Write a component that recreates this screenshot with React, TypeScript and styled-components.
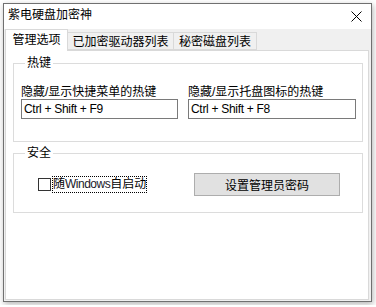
import React from 'react'
import styled, { createGlobalStyle } from 'styled-components'

const GlobalStyle = createGlobalStyle`
  html, body {
    margin: 0;
    padding: 0;
    background: #ffffff;
  }
  body {
    font-family: "Liberation Sans", "Noto Sans CJK SC", sans-serif;
    font-size: 12px;
    color: #000;
  }
`

const Window = styled.div`
  box-sizing: border-box;
  margin: 3px;
  width: 369px;
  height: 299px;
  border: 1px solid #707070;
  background: #f0f0f0;
  box-shadow: 1px 2px 6px rgba(0, 0, 0, 0.3);
  display: flex;
  flex-direction: column;
`

const TitleBar = styled.div`
  height: 25px;
  flex: none;
  background: #ffffff;
  display: flex;
  align-items: flex-start;
  padding: 4px 0 0 4px;
  box-sizing: border-box;
`

const Title = styled.span`
  font-family: "Noto Sans CJK SC", sans-serif;
  font-size: 12px;
  line-height: 12px;
`

const CloseIcon = styled.svg`
  margin: 3px 9px 0 auto;
  display: block;
`

const Client = styled.div`
  flex: 1;
  display: flex;
  flex-direction: column;
  padding: 0 2px 1px 1px;
  min-height: 0;
`

const TabStrip = styled.div`
  height: 21px;
  flex: none;
  display: flex;
  align-items: flex-end;
`

const Tab = styled.div<{ $active?: boolean; $w: number }>`
  box-sizing: border-box;
  width: ${p => p.$w}px;
  height: ${p => (p.$active ? 22 : 18)}px;
  margin-bottom: ${p => (p.$active ? -1 : 0)}px;
  margin-left: ${p => (p.$active ? 0 : -1)}px;
  padding-top: ${p => (p.$active ? 3 : 2)}px;
  border: 1px solid #d9d9d9;
  border-bottom: ${p => (p.$active ? 'none' : '1px solid #d9d9d9')};
  background: ${p => (p.$active ? '#ffffff' : '#f0f0f0')};
  position: relative;
  z-index: ${p => (p.$active ? 2 : 1)};
  display: flex;
  justify-content: center;
  font-family: "Noto Sans CJK SC", sans-serif;
  font-size: 12px;
  line-height: 12px;
  white-space: nowrap;
`

const Panel = styled.div`
  flex: 1;
  background: #ffffff;
  border: 1px solid #d9d9d9;
  padding: 5px 5px 0 7px;
  display: flex;
  flex-direction: column;
  gap: 4px;
`

const Group = styled.fieldset<{ $padTop: number; $padBottom: number }>`
  margin: 0;
  padding: ${p => p.$padTop}px 0 ${p => p.$padBottom}px 7px;
  border: 1px solid #dcdcdc;
  min-width: 0;
`

const Legend = styled.legend`
  margin-left: 4px;
  padding: 0 2px;
  font-size: 12px;
  line-height: 14px;
`

const HotkeyGrid = styled.div`
  display: grid;
  grid-template-columns: 157px 168px;
  column-gap: 10px;
`

const Field = styled.div`
  display: flex;
  flex-direction: column;
`

const FieldLabel = styled.div`
  font-size: 12px;
  line-height: 14px;
  white-space: nowrap;
`

const HotkeyInput = styled.div`
  box-sizing: border-box;
  height: 20px;
  border: 1px solid #7a7a7a;
  padding-left: 2px;
  font-family: "Liberation Sans", sans-serif;
  font-size: 12px;
  line-height: 18px;
  letter-spacing: -0.3px;
  white-space: nowrap;
`

const SecurityRow = styled.div`
  display: flex;
  align-items: center;
  padding-left: 17px;
`

const CheckBox = styled.span`
  box-sizing: border-box;
  width: 13px;
  height: 13px;
  border: 1px solid #333333;
  background: #ffffff;
  flex: none;
`

const CheckText = styled.span`
  margin-left: 1px;
  height: 17px;
  box-sizing: border-box;
  border: 1px dotted #000;
  line-height: 15px;
  font-size: 12px;
  white-space: nowrap;
`

const Win = styled.span`
  letter-spacing: -0.5px;
  color: #1a1a2a;
`

const Button = styled.div`
  box-sizing: border-box;
  margin: 0 22px 0 auto;
  width: 146px;
  height: 23px;
  border: 1px solid #adadad;
  background: #e1e1e1;
  display: flex;
  align-items: center;
  justify-content: center;
  font-family: "Noto Sans CJK SC", sans-serif;
  font-size: 12px;
  line-height: 12px;
`

export default function App() {
  return (
    <>
      <GlobalStyle />
      <Window>
        <TitleBar>
          <Title>紫电硬盘加密神</Title>
          <CloseIcon width="11" height="11" viewBox="0 0 11 11">
            <path d="M0.5 0.5 L10.5 10.5 M10.5 0.5 L0.5 10.5" stroke="#000" strokeWidth="1" fill="none" />
          </CloseIcon>
        </TitleBar>
        <Client>
          <TabStrip>
            <Tab $active $w={63}>管理选项</Tab>
            <Tab $w={107}>已加密驱动器列表</Tab>
            <Tab $w={84}>秘密磁盘列表</Tab>
          </TabStrip>
          <Panel>
            <Group $padTop={15} $padBottom={22}>
              <Legend>热键</Legend>
              <HotkeyGrid>
                <Field>
                  <FieldLabel>隐藏/显示快捷菜单的热键</FieldLabel>
                  <HotkeyInput>Ctrl + Shift + F9</HotkeyInput>
                </Field>
                <Field>
                  <FieldLabel>隐藏/显示托盘图标的热键</FieldLabel>
                  <HotkeyInput>Ctrl + Shift + F8</HotkeyInput>
                </Field>
              </HotkeyGrid>
            </Group>
            <Group $padTop={13} $padBottom={16}>
              <Legend>安全</Legend>
              <SecurityRow>
                <CheckBox />
                <CheckText>
                  随<Win>Windows</Win>自启动
                </CheckText>
                <Button>设置管理员密码</Button>
              </SecurityRow>
            </Group>
          </Panel>
        </Client>
      </Window>
    </>
  )
}
